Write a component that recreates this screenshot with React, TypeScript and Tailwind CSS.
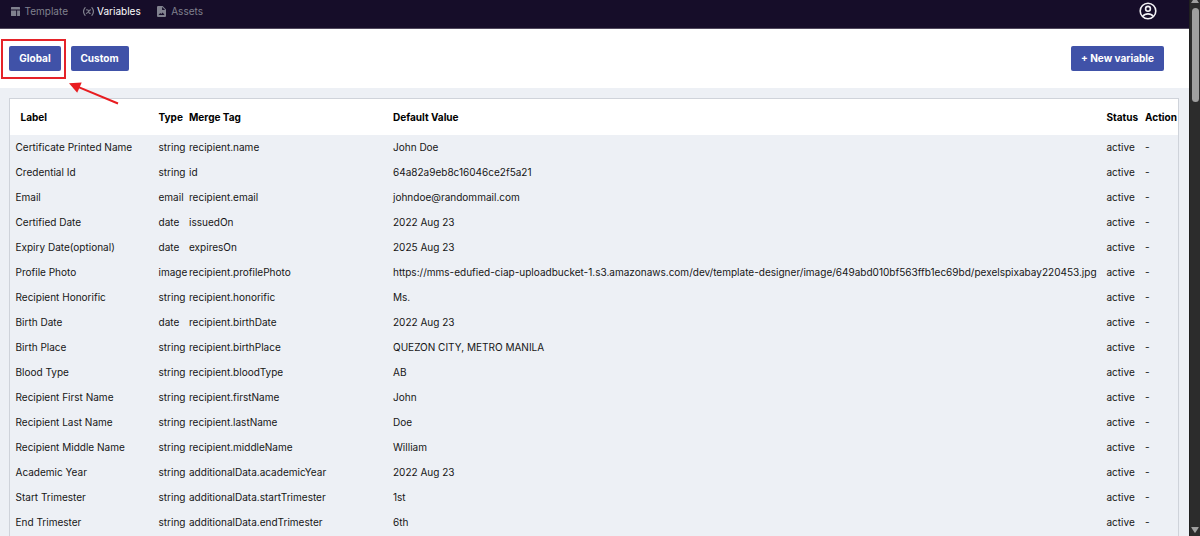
type Variable = {
  label: string;
  type: string;
  tag: string;
  value: string;
};

const variables: Variable[] = [
  { label: "Certificate Printed Name", type: "string", tag: "recipient.name", value: "John Doe" },
  { label: "Credential Id", type: "string", tag: "id", value: "64a82a9eb8c16046ce2f5a21" },
  { label: "Email", type: "email", tag: "recipient.email", value: "johndoe@randommail.com" },
  { label: "Certified Date", type: "date", tag: "issuedOn", value: "2022 Aug 23" },
  { label: "Expiry Date(optional)", type: "date", tag: "expiresOn", value: "2025 Aug 23" },
  {
    label: "Profile Photo",
    type: "image",
    tag: "recipient.profilePhoto",
    value:
      "https://mms-edufied-ciap-uploadbucket-1.s3.amazonaws.com/dev/template-designer/image/649abd010bf563ffb1ec69bd/pexelspixabay220453.jpg",
  },
  { label: "Recipient Honorific", type: "string", tag: "recipient.honorific", value: "Ms." },
  { label: "Birth Date", type: "date", tag: "recipient.birthDate", value: "2022 Aug 23" },
  { label: "Birth Place", type: "string", tag: "recipient.birthPlace", value: "QUEZON CITY, METRO MANILA" },
  { label: "Blood Type", type: "string", tag: "recipient.bloodType", value: "AB" },
  { label: "Recipient First Name", type: "string", tag: "recipient.firstName", value: "John" },
  { label: "Recipient Last Name", type: "string", tag: "recipient.lastName", value: "Doe" },
  { label: "Recipient Middle Name", type: "string", tag: "recipient.middleName", value: "William" },
  { label: "Academic Year", type: "string", tag: "additionalData.academicYear", value: "2022 Aug 23" },
  { label: "Start Trimester", type: "string", tag: "additionalData.startTrimester", value: "1st" },
  { label: "End Trimester", type: "string", tag: "additionalData.endTrimester", value: "6th" },
];

const columns = "grid grid-cols-[143px_30.5px_204px_713.5px_38.5px_1fr] items-center whitespace-nowrap";

function TemplateIcon() {
  return (
    <svg width="9" height="9" viewBox="0 0 9 9" fill="currentColor">
      <path d="M0.6 0h7.8a.6.6 0 0 1 .6.6v2H0v-2A.6.6 0 0 1 .6 0zM0 3.5h5.2V9H.6a.6.6 0 0 1-.6-.6zM6.1 3.5H9v4.9a.6.6 0 0 1-.6.6H6.1z" />
    </svg>
  );
}

function VariableIcon() {
  return (
    <svg width="11" height="9" viewBox="0 0 11 9" fill="none" stroke="currentColor" strokeWidth="1.15" strokeLinecap="round">
      <path d="M2.1.7C.3 2.9.3 6.1 2.1 8.3M8.9.7c1.8 2.2 1.8 5.4 0 7.6" />
      <path d="M3.6 2.8c1.5-.2 1.9.4 2.1 1.7.2 1.4.5 2 1.6 1.8M7.5 2.8c-1.3 0-2.7 3.5-4.1 3.5" />
    </svg>
  );
}

function AssetIcon() {
  return (
    <svg width="9" height="11" viewBox="0 0 9 11">
      <path fill="currentColor" d="M1.1 0h4.5L9 3.4v6.5A1.1 1.1 0 0 1 7.9 11H1.1A1.1 1.1 0 0 1 0 9.9V1.1A1.1 1.1 0 0 1 1.1 0z" />
      <path fill="#160d29" d="M5.1.9v3h3zM1.5 8.9h6L5.7 6.4 4.3 8 3.2 6.9z" />
    </svg>
  );
}

function UserIcon() {
  return (
    <svg width="18" height="18" viewBox="0 0 18 18" fill="none" stroke="#f4f3f6" strokeWidth="1.6">
      <circle cx="9" cy="9" r="7.8" />
      <circle cx="9" cy="6.8" r="2.4" />
      <path d="M3.8 14.4c1.2-1.7 3.1-2.5 5.2-2.5s4 .8 5.2 2.5" />
    </svg>
  );
}

function Scrollbar() {
  return (
    <div className="flex w-[11px] shrink-0 flex-col items-center justify-between border-l border-[#202020] bg-[#2c2c2c]">
      <div className="flex flex-col items-center">
        <svg width="8" height="4" viewBox="0 0 8 4" fill="#9f9f9f">
          <path d="M2 0h4l2 3H0z" />
        </svg>
        <div className="mt-1 h-[94px] w-[7px] rounded-full bg-[#9f9f9f]" />
      </div>
      <svg className="mb-[3px]" width="8" height="6" viewBox="0 0 8 6" fill="#9f9f9f">
        <path d="M0.7 0h6.6q.7 0 .4.6L4.5 5.5q-.5.6-1 0L.3.6Q0 0 .7 0z" />
      </svg>
    </div>
  );
}

export default function App() {
  return (
    <div className="flex h-[536px] w-[1200px] overflow-hidden bg-[#edf0f5] font-['Inter',sans-serif] text-[10.03px] text-[#161616]">
      <main className="relative flex min-w-0 flex-1 flex-col">
        <header className="flex h-[29px] shrink-0 items-start justify-between border-b border-[#51495d] bg-[#160d29] pr-[32px] pl-[11px] text-[#80818e]">
          <nav className="flex h-[23px] items-center">
            <a className="flex items-center gap-[4.5px]">
              <TemplateIcon />
              Template
            </a>
            <a className="ml-[15px] flex items-center gap-[3px]">
              <VariableIcon />
              <span className="text-white">Variables</span>
            </a>
            <a className="ml-[16.5px] flex items-center gap-[5px]">
              <AssetIcon />
              Assets
            </a>
          </nav>
          <div className="mt-[2px]">
            <UserIcon />
          </div>
        </header>

        <div className="flex h-[59px] shrink-0 items-center justify-between bg-white pr-[25px] pl-[9px] font-bold text-white">
          <div className="flex gap-[9.5px]">
            <button className="h-[25px] w-[52px] rounded-[2px] bg-[#4052a8] pt-px">Global</button>
            <button className="h-[25px] w-[58px] rounded-[2px] bg-[#4052a8] pt-px">Custom</button>
          </div>
          <button className="h-[25px] w-[93px] rounded-[2px] bg-[#4052a8] pt-px">+ New variable</button>
        </div>

        <section className="mt-[10px] mr-[10px] ml-[9px] flex-1 border-x-[1.5px] border-t-[1.5px] border-[#cfd3da]">
          <div className={`${columns} h-[36px] bg-white pl-[5.5px] pt-px font-bold text-black`}>
            <span className="pl-[5px]">Label</span>
            <span>Type</span>
            <span>Merge Tag</span>
            <span>Default Value</span>
            <span>Status</span>
            <span>Action</span>
          </div>
          {variables.map((v) => (
            <div key={v.label} className={`${columns} h-[25px] pl-[5.5px] pt-px`}>
              <span>{v.label}</span>
              <span>{v.type}</span>
              <span>{v.tag}</span>
              <span>{v.value}</span>
              <span>active</span>
              <span>-</span>
            </div>
          ))}
        </section>

        {/* callout around the Global tab */}
        <div className="absolute top-[39px] left-[1px] h-[40px] w-[65px] border-2 border-[#e52329]" />
        <svg className="absolute top-[80px] left-[66px]" width="56" height="26" viewBox="0 0 56 26">
          <path d="M12 6.8 52 23.5" stroke="#e81c20" strokeWidth="2" />
          <path d="M3 3.2 15.7 2.6 11.2 12.7z" fill="#e81c20" />
        </svg>
      </main>
      <Scrollbar />
    </div>
  );
}
